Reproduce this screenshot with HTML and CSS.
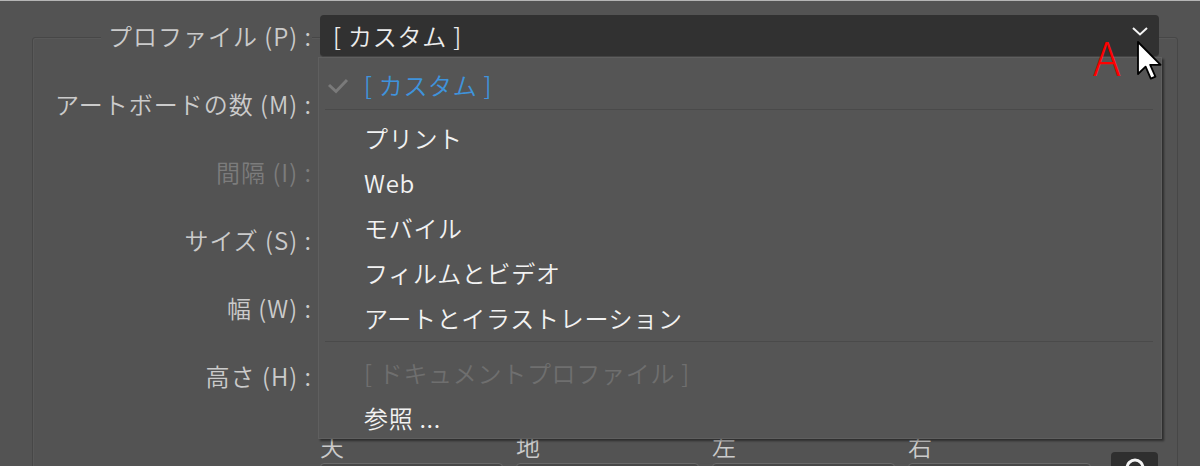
FILE: index.html
```html
<!DOCTYPE html>
<html lang="ja">
<head>
<meta charset="utf-8">
<link rel="stylesheet" href="styles.css">
</head>
<body>
<div class="window">
  <div class="group">
    <div class="row profile-row">
      <div class="lbl"><span class="legend">プロファイル (P) :</span></div>
      <div class="select-wrap">
        <div class="select">
          <span class="select-text">[ カスタム ]</span>
          <svg class="chev" width="16" height="9" viewBox="0 0 16 9"><polyline points="1,1 8,7.5 15,1" fill="none" stroke="#f4f4f4" stroke-width="2"/></svg>
        </div>
        <div class="menu">
          <div class="item selected">
            <svg class="check" width="22" height="16" viewBox="0 0 22 16"><polyline points="2,7 9,13.5 20,2" fill="none" stroke="#7a7a7a" stroke-width="3"/></svg>
            [ カスタム ]
          </div>
          <div class="sep"></div>
          <div class="item">プリント</div>
          <div class="item">Web</div>
          <div class="item">モバイル</div>
          <div class="item">フィルムとビデオ</div>
          <div class="item">アートとイラストレーション</div>
          <div class="sep sep2"></div>
          <div class="item disabled">[ ドキュメントプロファイル ]</div>
          <div class="item">参照 ...</div>
        </div>
      </div>
    </div>
    <div class="row"><div class="lbl">アートボードの数 (M) :</div><div></div></div>
    <div class="row"><div class="lbl dim">間隔 (I) :</div><div></div></div>
    <div class="row"><div class="lbl">サイズ (S) :</div><div></div></div>
    <div class="row"><div class="lbl">幅 (W) :</div><div></div></div>
    <div class="row"><div class="lbl">高さ (H) :</div><div></div></div>
    <div class="row margins">
      <div></div>
      <div class="mrow">
        <div class="mfield"><div class="mlbl">天</div><div class="box"></div></div>
        <div class="mfield"><div class="mlbl">地</div><div class="box"></div></div>
        <div class="mfield"><div class="mlbl">左</div><div class="box"></div></div>
        <div class="mfield"><div class="mlbl">右</div><div class="box"></div></div>
        <div class="linkbtn">
          <svg width="22" height="20" viewBox="0 0 22 20"><rect x="3" y="8" width="16" height="22" rx="8" fill="none" stroke="#f4f4f4" stroke-width="3"/></svg>
        </div>
      </div>
    </div>
  </div>
  <div class="annot">A</div>
  <svg class="cursor" width="26" height="40" viewBox="0 0 13 20"><path d="M0.5 0.5 L0.5 16.5 L4.3 12.8 L6.9 18.8 L9.2 17.8 L6.6 11.9 L11.8 11.9 Z" fill="#ffffff" stroke="#000000" stroke-width="0.9" stroke-linejoin="round"/></svg>
</div>
</body>
</html>
```
FILE: styles.css
```css
html, body {
  margin: 0;
  padding: 0;
}
body {
  background: #535353;
  width: 1200px;
  height: 466px;
  overflow: hidden;
  font-family: "Noto Sans CJK JP", "Noto Sans", sans-serif;
  font-weight: 350;
  font-size: 24px;
}
.window {
  position: relative;
  height: 466px;
  border-top: 1px solid #b5b5b5;
  box-sizing: border-box;
  overflow: hidden;
}
.group {
  margin: 36px 0 0 32px;
  width: 1146px;
  height: 520px;
  box-sizing: border-box;
  border: 1px solid #474747;
  box-shadow: inset 1px 1px 0 #595959;
  border-radius: 3px;
  display: flex;
  flex-direction: column;
  gap: 26px;
}
.row {
  display: grid;
  grid-template-columns: 278px 840px;
  column-gap: 9px;
  align-items: center;
  height: 42px;
  flex: none;
}
.profile-row {
  margin-top: -23px;
  position: relative;
  z-index: 5;
}
.lbl {
  text-align: right;
  color: #cbcbcb;
  line-height: 34px;
  white-space: nowrap;
  letter-spacing: 1px;
  margin-right: -1px;
}
.lbl.dim {
  color: #7c7c7c;
}
.legend {
  background: #535353;
  padding-left: 7px;
}
.select-wrap {
  position: relative;
  width: 839px;
}
.select {
  height: 42px;
  background: #313131;
  border-radius: 4px;
  display: flex;
  align-items: center;
  padding: 0 10px 0 13px;
  box-sizing: border-box;
  border-bottom: 1px solid #444;
}
.select-text {
  flex: 1;
  color: #ececec;
  line-height: 34px;
  letter-spacing: 0.8px;
}
.chev {
  margin-right: 1px;
  margin-top: -8px;
}
.menu {
  position: absolute;
  left: -2px;
  top: 42px;
  width: 844px;
  height: 382px;
  box-sizing: border-box;
  background: #555555;
  border: 1px solid #5f5f5f;
  box-shadow: 2px 2px 2px rgba(0, 0, 0, 0.45);
  padding-top: 3px;
}
.item {
  position: relative;
  height: 45px;
  line-height: 45px;
  padding-left: 45px;
  color: #f2f2f2;
  white-space: nowrap;
  letter-spacing: 0.7px;
}
.item.selected {
  color: #3f93dc;
  height: 48px;
  line-height: 48px;
}
.item.disabled {
  color: #6f6f6f;
}
.check {
  position: absolute;
  left: 8px;
  top: 17px;
}
.sep {
  height: 1px;
  background: #4a4a4a;
  margin: 0 8px 5px 6px;
}
.sep2 {
  margin-top: 1px;
  margin-bottom: 8px;
}
.margins {
  margin-top: 6px;
  height: auto;
  align-items: start;
}
.mrow {
  display: flex;
  align-items: flex-end;
  gap: 13px;
}
.mfield {
  width: 183px;
  display: flex;
  flex-direction: column;
}
.mlbl {
  color: #cbcbcb;
  line-height: 34px;
  height: 34px;
}
.box {
  height: 40px;
  border: 1px solid #6a6a6a;
  border-radius: 4px;
  background: #474747;
  box-sizing: border-box;
}
.linkbtn {
  width: 47px;
  height: 52px;
  margin-left: 7px;
  margin-bottom: -1px;
  background: #2f2f2f;
  border-radius: 4px;
  display: flex;
  justify-content: center;
  align-items: flex-start;
  padding-top: 0;
  box-sizing: border-box;
}
.annot {
  position: absolute;
  left: 1093px;
  top: 27px;
  color: #ff0000;
  font-family: "Noto Sans CJK JP", sans-serif;
  font-weight: 300;
  font-size: 47px;
  line-height: 56px;
  z-index: 10;
}
.cursor {
  position: absolute;
  left: 1137px;
  top: 40px;
  z-index: 11;
}
```
